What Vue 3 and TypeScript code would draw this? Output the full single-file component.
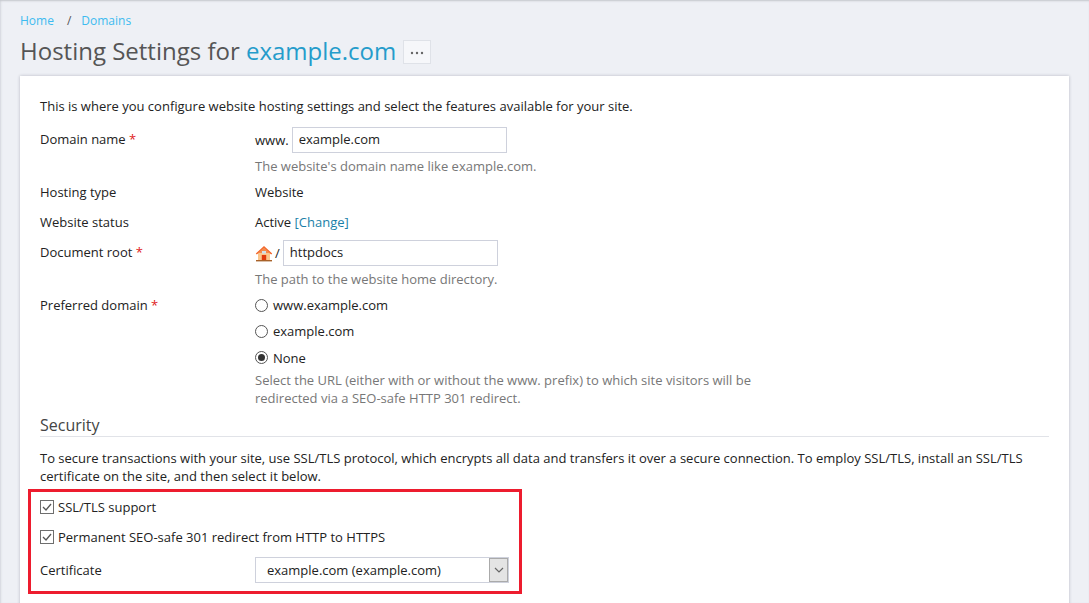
<script setup lang="ts">
const hostingRows = [
  { label: 'Hosting type', value: 'Website' },
];
const radios = [
  { label: 'www.example.com', checked: false },
  { label: 'example.com', checked: false },
  { label: 'None', checked: true },
];
</script>

<template>
  <div class="page">
    <nav class="crumbs">
      <a>Home</a>
      <span class="sep">/</span>
      <a>Domains</a>
    </nav>
    <div class="title-row">
      <h1>Hosting Settings for <a>example.com</a></h1>
      <button class="more" type="button">
        <svg width="14" height="4" viewBox="0 0 14 4"><circle cx="2" cy="2" r="1.2" /><circle cx="7" cy="2" r="1.2" /><circle cx="12" cy="2" r="1.2" /></svg>
      </button>
    </div>

    <main class="card">
      <p class="intro">This is where you configure website hosting settings and select the features available for your site.</p>

      <div class="row domain-row">
        <div class="label">Domain name <span class="req">*</span></div>
        <div class="field">
          <div class="inline"><span>www.</span><input class="text domain-input" value="example.com" /></div>
          <div class="hint">The website's domain name like example.com.</div>
        </div>
      </div>

      <div v-for="r in hostingRows" :key="r.label" class="row plain-row">
        <div class="label">{{ r.label }}</div>
        <div class="field">{{ r.value }}</div>
      </div>

      <div class="row plain-row">
        <div class="label">Website status</div>
        <div class="field">Active <a class="link">[Change]</a></div>
      </div>

      <div class="row docroot-row">
        <div class="label">Document root <span class="req">*</span></div>
        <div class="field">
          <div class="inline">
            <svg class="home" width="18" height="17" viewBox="0 0 18 17">
              <path d="M3 8h12v7H3z" fill="#fbc58a" />
              <path d="M9 1 0.8 8.6l1 1L9 3.4l7.2 6.2 1-1z" fill="#f2652a" />
              <path d="M9 2.6 3 8h12z" fill="#f58a4b" />
              <rect x="7" y="6" width="4" height="2.6" fill="#cfe0ea" />
              <rect x="6.8" y="10" width="4.4" height="5" fill="#e03a0c" />
              <rect x="1" y="15" width="16" height="1.4" fill="#a8622a" />
            </svg>
            <span class="slash">/</span>
            <input class="text root-input" value="httpdocs" />
          </div>
          <div class="hint">The path to the website home directory.</div>
        </div>
      </div>

      <div class="row pref-row">
        <div class="label">Preferred domain <span class="req">*</span></div>
        <div class="field">
          <label v-for="o in radios" :key="o.label" class="radio">
            <span class="dot" :class="{ on: o.checked }"></span>{{ o.label }}
          </label>
          <div class="hint wrap">Select the URL (either with or without the www. prefix) to which site visitors will be redirected via a SEO-safe HTTP 301 redirect.</div>
        </div>
      </div>

      <h2>Security</h2>
      <p class="sec-text">To secure transactions with your site, use SSL/TLS protocol, which encrypts all data and transfers it over a secure connection. To employ SSL/TLS, install an SSL/TLS certificate on the site, and then select it below.</p>

      <section class="marked">
        <label class="check">
          <svg width="14" height="14" viewBox="0 0 14 14"><rect x="0.5" y="0.5" width="13" height="13" fill="#fff" stroke="#6e6e6e" /><path d="M3 7l3 3 5-6" fill="none" stroke="#555" stroke-width="1.3" /></svg>
          SSL/TLS support
        </label>
        <label class="check second">
          <svg width="14" height="14" viewBox="0 0 14 14"><rect x="0.5" y="0.5" width="13" height="13" fill="#fff" stroke="#6e6e6e" /><path d="M3 7l3 3 5-6" fill="none" stroke="#555" stroke-width="1.3" /></svg>
          Permanent SEO-safe 301 redirect from HTTP to HTTPS
        </label>
        <div class="cert">
          <div class="cert-label">Certificate</div>
          <div class="select">
            <span class="select-text">example.com (example.com)</span>
            <span class="arrow">
              <svg width="10" height="6" viewBox="0 0 10 6"><path d="M1 1l4 4 4-4" fill="none" stroke="#666" stroke-width="1.2" /></svg>
            </span>
          </div>
        </div>
      </section>
    </main>
  </div>
</template>

<style>
html, body { margin: 0; height: 100%; overflow: hidden; background: #eef0f5; }
</style>

<style scoped>
.page {
  height: 603px;
  box-sizing: border-box;
  overflow: hidden;
  padding: 12px 20px 0;
  background: #eef0f5;
  box-shadow: inset 0 2px 2px -1px #c4c7cc, inset 2px 0 2px -1px #d6d8dd;
  font-family: "Open Sans", sans-serif;
  font-size: 13px;
  line-height: 18px;
  color: #222;
}
.crumbs { font-size: 12px; line-height: 18px; display: flex; color: #555; }
.crumbs a { color: #3dbbf0; }
.sep { margin: 0 10px 0 13px; }
.title-row { display: flex; align-items: center; margin-top: 3px; height: 36px; }
h1 { margin: 0; font-size: 24px; font-weight: 400; line-height: 36px; color: #555; }
h1 a { color: #259ccb; }
.more {
  width: 28px; height: 24px; margin: 2px 0 0 7px; padding: 2px 0 0;
  background: #f6f7fa; border: 1px solid #dfe2e8; display: flex; align-items: center; justify-content: center;
}
.more svg { fill: #666; }
.card {
  margin-top: 7px;
  background: #fff;
  height: 600px;
  padding: 21px 20px 0;
  box-shadow: 0 0 3px rgba(60, 60, 80, 0.3);
}
.intro { margin: 0 0 11px; }
.row { display: flex; }
.label { width: 215px; flex: none; }
.req { color: #e02020; }
.inline { display: flex; align-items: center; height: 26px; margin-top: 1px; }
.text {
  box-sizing: border-box; height: 26px; padding: 0 6px 2px; margin: 0;
  border: 1px solid #ced1dc; font: inherit; color: #222; background: #fff; outline: none;
}
.domain-input { width: 215px; margin-left: 3px; }
.root-input { width: 215px; margin-left: 3px; }
.hint { color: #777; margin-top: 4px; }
.wrap { width: 520px; margin-top: 4px; }
.domain-row .label, .docroot-row .label { padding-top: 4px; }
.domain-row { height: 53px; }
.plain-row { height: 30px; align-items: flex-start; padding-top: 0; }
.domain-row + .plain-row { margin-top: 4px; }
.docroot-row { height: 53px; margin-top: -4px; }
.home { margin-right: 2px; }
.slash { color: #222; }
.pref-row { margin-top: 4px; }
.radio { display: flex; align-items: center; height: 18px; margin-bottom: 8.4px; }
.radio:nth-of-type(3) { margin-bottom: 0; }
.dot {
  box-sizing: border-box; width: 13px; height: 13px; border-radius: 50%;
  border: 1px solid #555; margin-right: 5px; background: #fff; position: relative;
}
.dot.on::after {
  content: ""; position: absolute; left: 2px; top: 2px; width: 7px; height: 7px; border-radius: 50%; background: #333;
}
.link { color: #1a7fa8; }
h2 {
  margin: 7px 0 12px; padding: 0; font-size: 16px; font-weight: 400; line-height: 22px;
  color: #444; border-bottom: 1px solid #e1e3e8;
}
.sec-text { margin: 0; }
.marked {
  box-sizing: border-box;
  width: 494px; height: 105px; margin: 4px 0 0 -12px; padding: 6px 0 0 9px;
  border: 3px solid #ed1c2e;
}
.check { display: flex; align-items: center; gap: 4px; height: 18px; }
.check.second { margin-top: 12px; }
.cert { display: flex; align-items: center; margin-top: 11px; }
.cert-label { width: 215px; flex: none; }
.select {
  box-sizing: border-box; width: 254px; height: 26px; border: 1px solid #ced1dc;
  display: flex; align-items: stretch; justify-content: space-between;
}
.select-text { padding: 3px 0 0 11px; }
.arrow {
  width: 17px; background: #e4e4e4; border: 1px solid #aaa;
  display: flex; align-items: center; justify-content: center;
}
</style>
